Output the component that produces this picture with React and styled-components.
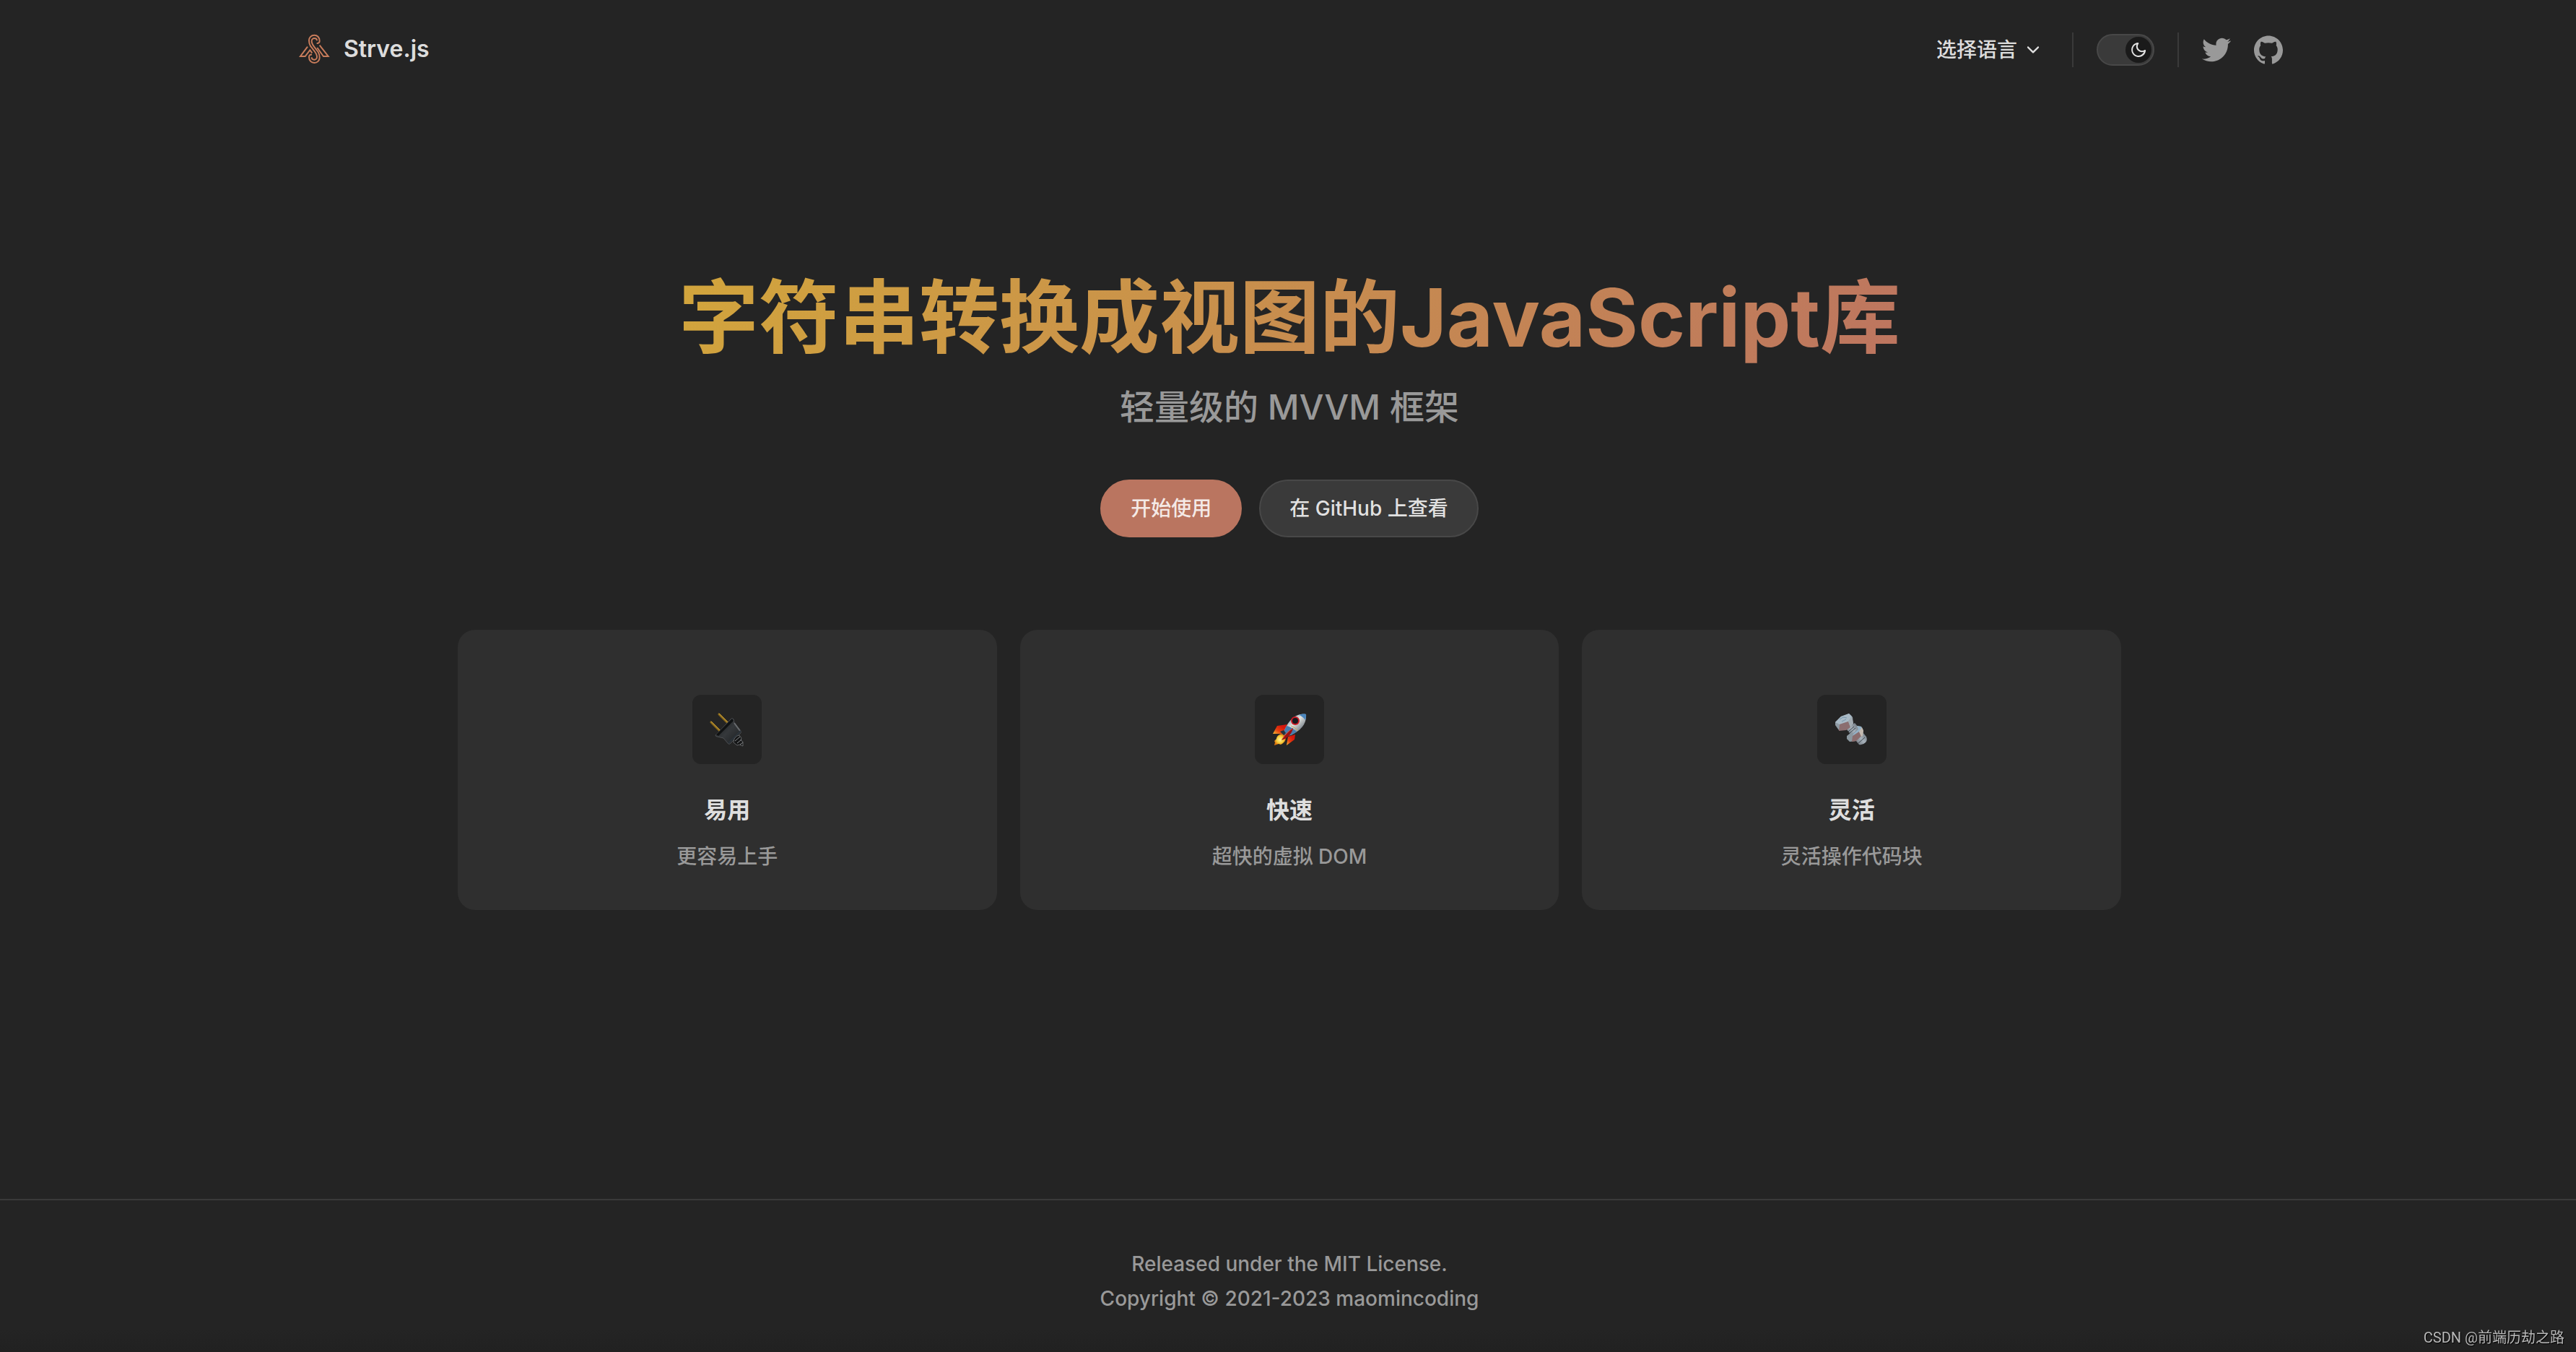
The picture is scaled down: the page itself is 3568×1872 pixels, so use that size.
import { useState } from 'react';
import styled, { createGlobalStyle } from 'styled-components';

const features = [
  { icon: 'plug', title: '易用', details: '更容易上手' },
  { icon: 'rocket', title: '快速', details: '超快的虚拟 DOM' },
  { icon: 'bolt', title: '灵活', details: '灵活操作代码块' },
];

function Logo() {
  return (
    <LogoSvg viewBox="0 0 144 144" aria-hidden="true">
      <path d="M86 48c7 1 12-3 12-10 0-15-10-24-22-24-13 0-22 10-22 22 0 9 1 15 6 23l17 22c6 8 10 15 10 23 0 7-5 12-11 12s-11-4-11-10" />
      <path d="M66 95c-7-1-12 3-12 10 0 15 10 24 22 24 13 0 22-10 22-22 0-9-1-15-6-23L75 62c-6-8-10-15-10-23 0-7 5-12 11-12s11 4 11 10" />
      <path d="M48 62 18 102h20l20-26 9 12" />
      <path d="m98 56 36 46h-20L88 66" />
    </LogoSvg>
  );
}

function PlugIcon() {
  return (
    <EmojiSvg viewBox="0 0 48 48" aria-hidden="true">
      <defs>
        <linearGradient id="plugBody" x1="0" y1="0" x2="1" y2="1">
          <stop offset="0" stopColor="#17191b" />
          <stop offset="0.5" stopColor="#35383b" />
          <stop offset="1" stopColor="#1b1d1f" />
        </linearGradient>
      </defs>
      <path d="m2 14 12 12M13 3l12 12" stroke="#8a6a1c" strokeWidth="3" strokeLinecap="round" />
      <path d="m2 13 12 12M13 2l12 12" stroke="#cfa23a" strokeWidth="1" strokeLinecap="round" />
      <path d="M8 32 30 9q2-1 3 1l1 5 9 11q1 3-1 4L28 44q-2 1-3-1l-6-7-8-2q-3 0-3-2Z" fill="url(#plugBody)" stroke="#4c4e51" strokeWidth="1" />
      <path d="M9 31 31 9l2 3-21 21Z" fill="#101213" />
      <path d="m34 15 8 11" stroke="#686b6e" strokeWidth="2" />
      <path d="m26 43 17-17" stroke="#2b333a" strokeWidth="2" />
      <path d="M34 37q3-5 7-5l3 4-1 3 3 2v6l-5-2-3 1-5-4Z" fill="#151617" stroke="#606264" strokeWidth="1" />
      <path d="m35 40 7-6M38 43l6-5M42 45l4-3" stroke="#8a8c8e" strokeWidth="1" />
    </EmojiSvg>
  );
}

function RocketIcon() {
  return (
    <EmojiSvg viewBox="0 0 48 48" aria-hidden="true">
      <defs>
        <linearGradient id="rocketBody" x1="0" y1="0" x2="1" y2="1">
          <stop offset="0.2" stopColor="#8499ad" />
          <stop offset="0.45" stopColor="#e3e3df" />
          <stop offset="0.8" stopColor="#69747e" />
        </linearGradient>
        <linearGradient id="rocketFin" x1="1" y1="0" x2="0" y2="1">
          <stop offset="0.3" stopColor="#d5170c" />
          <stop offset="0.65" stopColor="#e5400f" />
          <stop offset="1" stopColor="#f4bd35" />
        </linearGradient>
        <radialGradient id="rocketFire">
          <stop offset="0" stopColor="#fff3a0" />
          <stop offset="0.6" stopColor="#f3cb38" />
          <stop offset="1" stopColor="#db7510" />
        </radialGradient>
      </defs>
      <path d="m1 30 6-11 14-2-6 13Z" fill="url(#rocketFin)" />
      <path d="m20 46 2-12 10-3-1 7Z" fill="url(#rocketFin)" />
      <path d="M15 30c-6 0-9 4-9 7l-3 3 1 2-1 4 6-2 3 1c6-3 7-6 7-12Z" fill="url(#rocketFire)" />
      <path d="M47 3c-13-2-23 6-30 22l-1 5 4 3 6-1C40 25 48 17 47 3Z" fill="url(#rocketBody)" />
      <path d="M47 3c-4-1-7 0-10 1 3 1 7 4 9 7 1-3 1-5 1-8Z" fill="#4b86bd" />
      <path d="m17 25 3-6c5 1 11 5 14 8-4 3-8 5-13 6l-5-3Z" fill="#477cae" />
      <path d="M26 19c3 1 8 4 10 7" stroke="#c5aa68" strokeWidth="1" fill="none" />
      <circle cx="32" cy="12" r="6" fill="#c91b25" />
      <circle cx="32" cy="12" r="4" fill="#15191e" />
      <path d="M29 22c-5 3-13 11-16 17 7-2 15-9 16-17Z" fill="#9b1014" />
      <path d="M28 23c-5 3-10 8-13 13" stroke="#e84b31" strokeWidth="1" fill="none" />
      <path d="m11 27 5-2 3 4-3 3Z" fill="#27313a" />
    </EmojiSvg>
  );
}

function BoltIcon() {
  return (
    <EmojiSvg viewBox="0 0 48 48" aria-hidden="true">
      <defs>
        <linearGradient id="boltShaft" x1="0" y1="1" x2="1" y2="0">
          <stop offset="0.1" stopColor="#454c53" />
          <stop offset="0.5" stopColor="#a7b1ba" />
          <stop offset="0.9" stopColor="#4b535b" />
        </linearGradient>
      </defs>
      <path d="m16 23 12-8 16 19q2 5-1 8-4 4-9 3Z" fill="url(#boltShaft)" />
      <path d="m19 27 8-7M21 29l8-7M24 32l8-7M33 43l9-8" stroke="#3c454d" strokeWidth="1" />
      <path d="m1 14 8-8 11-4 5 5 1 9-10 7-10 2-5-7Z" fill="#8e9aa3" />
      <path d="m1 14 8-8 11-4 4 4-5 7-12 4Z" fill="#a9bac6" />
      <path d="m7 17 12-4 3 8-6 4-10 1Z" fill="#8b6e70" />
      <path d="m19 13 5-7 2 10-4 5Z" fill="#a3acb2" />
      <path d="m7 10 5-3 5 1M10 13l6-3" stroke="#7897ad" strokeWidth="1" fill="none" />
      <path d="m17 33 5-4h5l5-5-1-5 6 1 3 5-1 7-9 8-9 1-4-4Z" fill="#8b979f" />
      <path d="m27 29 6-5-2-5 6 1 2 5-6 5-8 3Z" fill="#94b1c6" />
      <path d="m25 33 9-6 3 6-7 7-6 1Z" fill="#8b6d6e" />
      <path d="m34 27 4-6 2 5-1 7-2 1Z" fill="#c3b9af" />
    </EmojiSvg>
  );
}

const featureIcons = { plug: PlugIcon, rocket: RocketIcon, bolt: BoltIcon };

function App() {
  const [dark, setDark] = useState(true);

  return (
    <Page>
      <GlobalStyle />
      <Nav>
        <NavInner>
          <Brand href="/">
            <Logo />
            Strve.js
          </Brand>
          <NavMenu>
            <LangButton type="button" aria-haspopup="true">
              选择语言
              <Chevron viewBox="0 0 24 24" aria-hidden="true">
                <path d="M12,16c-0.3,0-0.5-0.1-0.7-0.3l-6-6c-0.4-0.4-0.4-1,0-1.4s1-0.4,1.4,0l5.3,5.3l5.3-5.3c0.4-0.4,1-0.4,1.4,0s0.4,1,0,1.4l-6,6C12.5,15.9,12.3,16,12,16z" />
              </Chevron>
            </LangButton>
            <Divider $gap="16px" />
            <Toggle type="button" role="switch" aria-label="toggle dark mode" aria-checked={dark} $on={dark} onClick={() => setDark(!dark)}>
              <Knob>
                <MoonSvg viewBox="0 0 24 24" aria-hidden="true">
                  <path d="M12.1,22c-0.3,0-0.6,0-0.9,0c-5.5-0.5-9.5-5.4-9-10.9c0.4-4.8,4.2-8.6,9-9c0.4,0,0.8,0.2,1,0.5c0.2,0.3,0.2,0.8-0.1,1.1c-2,2.7-1.4,6.4,1.3,8.4c2.1,1.6,5,1.6,7.1,0c0.3-0.2,0.7-0.3,1.1-0.1c0.3,0.2,0.5,0.6,0.5,1c-0.2,2.7-1.5,5.1-3.6,6.8C16.6,21.2,14.4,22,12.1,22z M9.3,4.4c-2.9,1-5,3.6-5.2,6.8c-0.4,4.4,2.8,8.3,7.2,8.7c2.1,0.2,4.2-0.4,5.8-1.8c1.1-0.9,1.9-2.1,2.4-3.4c-2.5,0.9-5.3,0.5-7.5-1.1C9.2,11.4,8.1,7.7,9.3,4.4z" />
                </MoonSvg>
              </Knob>
            </Toggle>
            <Divider $gap="32px" />
            <SocialLinks>
              <SocialLink href="#twitter" aria-label="twitter">
                <svg viewBox="0 0 24 24" aria-hidden="true">
                  <path d="M23.954 4.569c-.885.389-1.83.654-2.825.775 1.014-.611 1.794-1.574 2.163-2.723-.951.555-2.005.959-3.127 1.184-.896-.959-2.173-1.559-3.591-1.559-2.717 0-4.92 2.203-4.92 4.917 0 .39.045.765.127 1.124C7.691 8.094 4.066 6.13 1.64 3.161c-.427.722-.666 1.561-.666 2.475 0 1.71.87 3.213 2.188 4.096-.807-.026-1.566-.248-2.228-.616v.061c0 2.385 1.693 4.374 3.946 4.827-.413.111-.849.171-1.296.171-.314 0-.615-.03-.916-.086.631 1.953 2.445 3.377 4.604 3.417-1.68 1.319-3.809 2.105-6.102 2.105-.39 0-.779-.023-1.17-.067 2.189 1.394 4.768 2.209 7.557 2.209 9.054 0 13.999-7.496 13.999-13.986 0-.209 0-.42-.015-.63.961-.689 1.8-1.56 2.46-2.548l-.047-.02z" />
                </svg>
              </SocialLink>
              <SocialLink href="#github" aria-label="github">
                <svg viewBox="0 0 24 24" aria-hidden="true">
                  <path d="M12 .297c-6.63 0-12 5.373-12 12 0 5.303 3.438 9.8 8.205 11.385.6.113.82-.258.82-.577 0-.285-.01-1.04-.015-2.04-3.338.724-4.042-1.61-4.042-1.61C4.422 18.07 3.633 17.7 3.633 17.7c-1.087-.744.084-.729.084-.729 1.205.084 1.838 1.236 1.838 1.236 1.07 1.835 2.809 1.305 3.495.998.108-.776.417-1.305.76-1.605-2.665-.3-5.466-1.332-5.466-5.93 0-1.31.465-2.38 1.235-3.22-.135-.303-.54-1.523.105-3.176 0 0 1.005-.322 3.3 1.23.96-.267 1.98-.399 3-.405 1.02.006 2.04.138 3 .405 2.28-1.552 3.285-1.23 3.285-1.23.645 1.653.24 2.873.12 3.176.765.84 1.23 1.91 1.23 3.22 0 4.61-2.805 5.625-5.475 5.92.42.36.81 1.096.81 2.22 0 1.606-.015 2.896-.015 3.286 0 .315.21.69.825.57C20.565 22.092 24 17.592 24 12.297c0-6.627-5.373-12-12-12" />
                </svg>
              </SocialLink>
            </SocialLinks>
          </NavMenu>
        </NavInner>
      </Nav>
      <Main>
        <Hero>
          <Name>字符串转换成视图的JavaScript库</Name>
          <Tagline>轻量级的 MVVM 框架</Tagline>
          <Actions>
            <ActionLink href="#start" $brand>开始使用</ActionLink>
            <ActionLink href="#github">在 GitHub 上查看</ActionLink>
          </Actions>
        </Hero>
        <Features>
          {features.map(({ icon, title, details }) => {
            const Icon = featureIcons[icon];
            return (
              <Card key={title}>
                <IconBox><Icon /></IconBox>
                <CardTitle>{title}</CardTitle>
                <CardDetails>{details}</CardDetails>
              </Card>
            );
          })}
        </Features>
      </Main>
      <Footer>
        <p>Released under the MIT License.</p>
        <p>Copyright © 2021-2023 maomincoding</p>
      </Footer>
      <Watermark>CSDN @前端历劫之路</Watermark>
    </Page>
  );
}

export default App;

const GlobalStyle = createGlobalStyle`
  * {
    box-sizing: border-box;
  }
  body {
    margin: 0;
    background-color: #242424;
    color: rgba(255, 255, 255, 0.87);
    font-family: Inter, "Noto Sans CJK SC", sans-serif;
    font-size: 28px;
    font-weight: 500;
    line-height: 48px;
  }
  a {
    color: inherit;
    text-decoration: none;
  }
  h1, h2, p {
    margin: 0;
  }
  svg {
    display: block;
  }
`
const Page = styled.div`
  display: flex;
  flex-direction: column;
  min-height: 100vh;
`
const Nav = styled.header`
  padding: 0 64px 0 68px;
`
const NavInner = styled.div`
  display: flex;
  align-items: center;
  justify-content: space-between;
  max-width: 2752px;
  height: 138px;
  margin: 0 auto;
`
const Brand = styled.a`
  display: flex;
  align-items: center;
  gap: 18px;
  font-size: 32px;
  font-weight: 600;
  padding-bottom: 2px;
`
const LogoSvg = styled.svg`
  width: 48px;
  height: 48px;
  fill: none;
  stroke: #c87c5b;
  stroke-width: 6;
`
const NavMenu = styled.nav`
  display: flex;
  align-items: center;
`
const LangButton = styled.button`
  display: flex;
  align-items: center;
  gap: 8px;
  padding: 0 24px;
  border: 0;
  background: none;
  color: inherit;
  font: inherit;
`
const Chevron = styled.svg`
  width: 28px;
  height: 28px;
  fill: currentColor;
`
const Divider = styled.span`
  width: 2px;
  height: 48px;
  margin-left: ${props => props.$gap};
  background-color: #3a3a3a;
`
const Toggle = styled.button`
  display: flex;
  justify-content: ${props => props.$on ? 'flex-end' : 'flex-start'};
  width: 80px;
  height: 44px;
  margin-left: 32px;
  padding: 2px;
  border: 2px solid #484848;
  border-radius: 22px;
  background-color: #3a3a3a;
`
const Knob = styled.span`
  display: flex;
  align-items: center;
  justify-content: center;
  width: 36px;
  height: 36px;
  border-radius: 50%;
  background-color: #1a1a1a;
`
const MoonSvg = styled.svg`
  width: 24px;
  height: 24px;
  fill: #e2e2e2;
`
const SocialLinks = styled.div`
  display: flex;
  margin-left: 16px;
  margin-right: -16px;
`
const SocialLink = styled.a`
  display: flex;
  align-items: center;
  justify-content: center;
  width: 72px;
  height: 72px;
  color: #999999;

  svg {
    width: 40px;
    height: 40px;
    fill: currentColor;
  }
`
const Main = styled.main`
  flex: 1;
  padding: 238px 64px 400px 68px;
`
const Hero = styled.section`
  display: flex;
  flex-direction: column;
  align-items: center;
  text-align: center;
`
const Name = styled.h1`
  font-size: 111px;
  font-weight: 700;
  line-height: 128px;
  color: transparent;
  background: linear-gradient(120deg, #d2a53c, #bd7560);
  background-clip: text;
  -webkit-background-clip: text;
`
const Tagline = styled.p`
  padding-top: 24px;
  font-size: 48px;
  line-height: 72px;
  color: #999999;
`
const Actions = styled.div`
  display: flex;
  gap: 24px;
  padding-top: 64px;
`
const ActionLink = styled.a`
  padding: 0 40px;
  border: 2px solid ${props => props.$brand ? '#ba7560' : '#484848'};
  border-radius: 40px;
  line-height: 76px;
  background-color: ${props => props.$brand ? '#ba7560' : '#3a3a3a'};
`
const Features = styled.section`
  display: grid;
  grid-template-columns: repeat(3, 1fr);
  gap: 32px;
  max-width: 2304px;
  margin: 128px auto 0;
`
const Card = styled.article`
  display: flex;
  flex-direction: column;
  align-items: center;
  padding: 90px 50px 50px;
  border-radius: 24px;
  text-align: center;
  background-color: #2f2f2f;
`
const IconBox = styled.div`
  display: flex;
  align-items: center;
  justify-content: center;
  width: 96px;
  height: 96px;
  margin-bottom: 40px;
  border-radius: 12px;
  background-color: #242424;
`
const EmojiSvg = styled.svg`
  width: 48px;
  height: 48px;
  fill: none;
`
const CardTitle = styled.h2`
  font-size: 32px;
  font-weight: 600;
  line-height: 48px;
`
const CardDetails = styled.p`
  padding-top: 16px;
  color: #999999;
`
const Footer = styled.footer`
  padding: 64px 64px 50px 68px;
  border-top: 2px solid #3a3a3a;
  text-align: center;
  color: #999999;
  background: linear-gradient(to top, #212121, #242424 32px);
`
const Watermark = styled.div`
  position: fixed;
  right: 16px;
  bottom: 8px;
  font-family: Roboto, "Noto Sans CJK SC", sans-serif;
  font-size: 20px;
  font-weight: 400;
  line-height: 24px;
  color: #b8b8b8;
  text-shadow: 1px 1px 1px #000000;
`
